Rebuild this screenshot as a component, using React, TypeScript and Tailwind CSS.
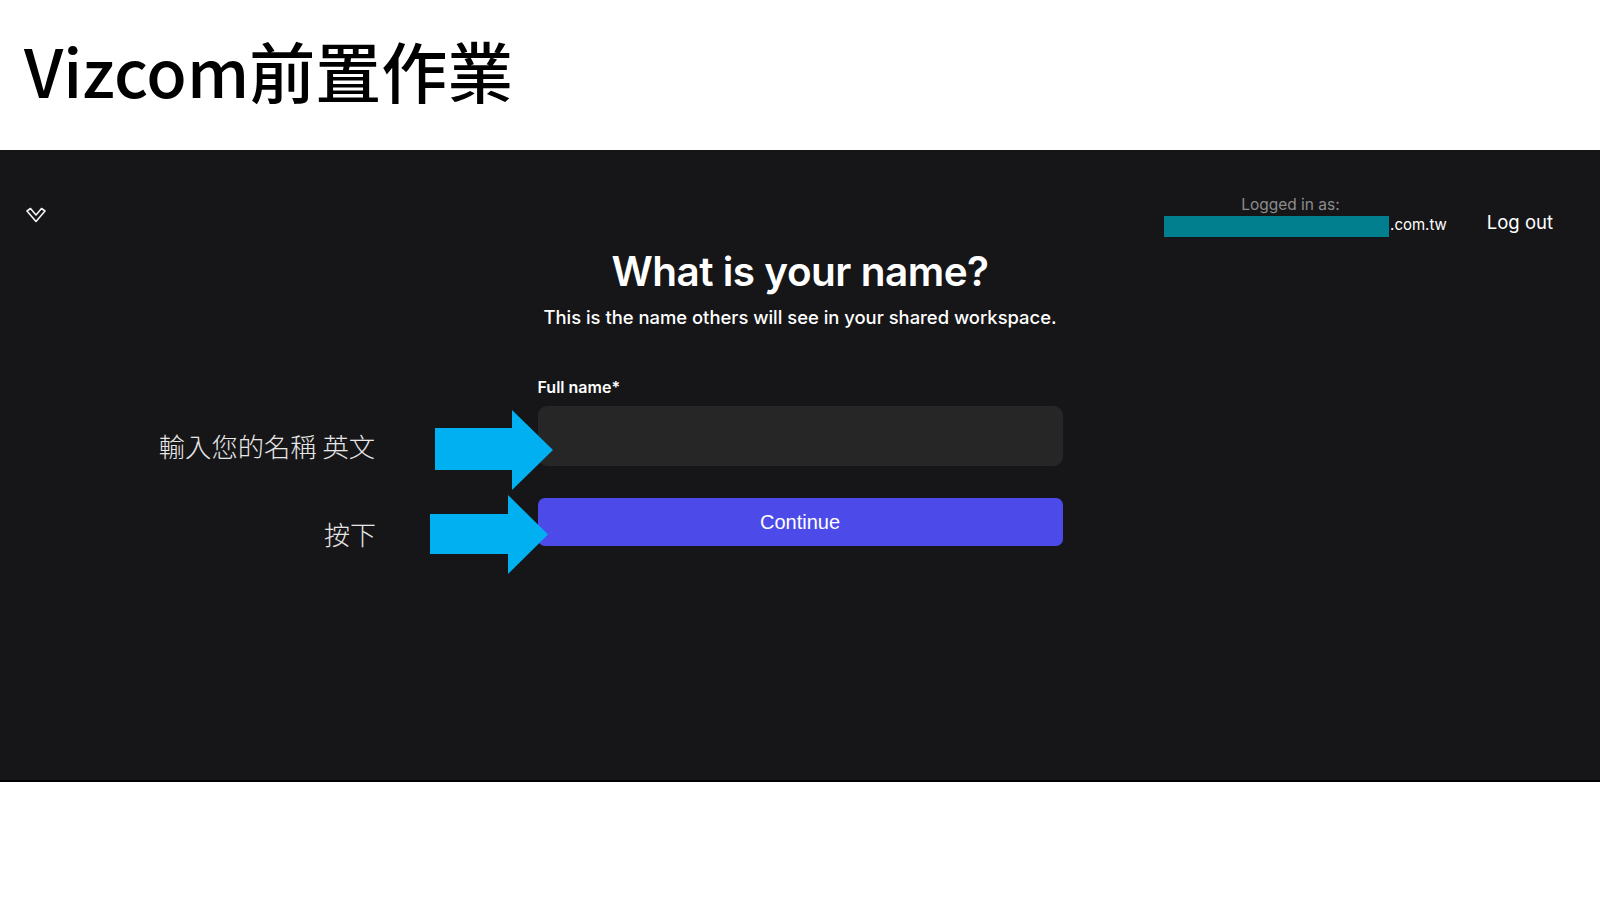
import React from "react";

function Chevron() {
  return (
    <svg width="22" height="18" viewBox="0 0 22 18" fill="none">
      <polygon
        points="2,5 5.5,2.5 11,9 16.5,2.5 20,5 11,15.5"
        stroke="#f2f2f2"
        strokeWidth="1.6"
        strokeLinejoin="round"
      />
    </svg>
  );
}

function Arrow({ w, h, bodyTop, bodyH, headW }: { w: number; h: number; bodyTop: number; bodyH: number; headW: number }) {
  const bx = w - headW;
  return (
    <svg width={w} height={h} viewBox={`0 0 ${w} ${h}`}>
      <polygon
        points={`0,${bodyTop} ${bx},${bodyTop} ${bx},0 ${w},${h / 2} ${bx},${h} ${bx},${bodyTop + bodyH} 0,${bodyTop + bodyH}`}
        fill="#00b0f0"
      />
    </svg>
  );
}

export default function App() {
  return (
    <div className="w-[1600px] h-[900px] bg-white flex flex-col overflow-hidden">
      <div className="h-[150px] shrink-0 pl-[24px] pt-[36px]">
        <h1
          className="text-[66px] leading-none text-black font-medium"
          style={{ fontFamily: '"Noto Sans CJK TC", "Noto Sans", sans-serif' }}
        >
          Vizcom前置作業
        </h1>
      </div>
      <div
        className="relative h-[632px] shrink-0 bg-[#161618] border-b-2 border-black"
        style={{ fontFamily: 'Inter, "Noto Sans", sans-serif' }}
      >
        <div className="h-[90px] flex items-start justify-between pl-[25px] pr-[47px] pt-[45px]">
          <div className="mt-[11px]">
            <Chevron />
          </div>
          <div className="flex items-start gap-[40px]">
            <div className="flex flex-col items-center">
              <div className="text-[15.5px] leading-[20px] text-[#8c8c8c] pr-[30px]">Logged in as:</div>
              <div className="flex items-center mt-[1px]">
                <div className="w-[225px] h-[21px] bg-[#017f8f]" />
                <span className="text-[15px] leading-[20px] text-white -mt-[3px] ml-[1px]">.com.tw</span>
              </div>
            </div>
            <div className="text-[18.5px] leading-[24px] text-white mt-[15px]">Log out</div>
          </div>
        </div>

        <div className="flex flex-col items-center">
          <h2 className="mt-[5px] text-[40.5px] leading-[54px] font-semibold text-white tracking-[-0.5px]">
            What is your name?
          </h2>
          <p className="mt-[6px] text-[18.4px] leading-[24px] font-medium text-white">
            This is the name others will see in your shared workspace.
          </p>
          <div className="w-[525px] mt-[48px]">
            <div className="text-[16px] leading-[20px] font-semibold text-white">Full name*</div>
            <div className="mt-[9px] h-[60px] rounded-[9px] bg-[#262626]" />
            <button
              className="mt-[32px] w-full h-[48px] rounded-[7px] bg-[#4c4bea] text-white text-[20px]"
              style={{ fontFamily: '"Liberation Sans", Arial, sans-serif' }}
            >
              Continue
            </button>
          </div>
        </div>

        <div
          className="absolute right-[1225px] top-[280px] text-[26.3px] leading-[32px] text-[#e6e6e6] font-light whitespace-nowrap"
          style={{ fontFamily: '"Noto Sans CJK TC", sans-serif' }}
        >
          輸入您的名稱 英文
        </div>
        <div
          className="absolute right-[1224px] top-[368px] text-[26px] leading-[32px] text-[#e6e6e6] font-light whitespace-nowrap"
          style={{ fontFamily: '"Noto Sans CJK TC", sans-serif' }}
        >
          按下
        </div>
        <div className="absolute left-[435px] top-[260px]">
          <Arrow w={118} h={80} bodyTop={18} bodyH={42} headW={41} />
        </div>
        <div className="absolute left-[430px] top-[345px]">
          <Arrow w={118} h={79} bodyTop={19} bodyH={40} headW={40} />
        </div>
      </div>
      <div className="flex-1 bg-white" />
    </div>
  );
}
